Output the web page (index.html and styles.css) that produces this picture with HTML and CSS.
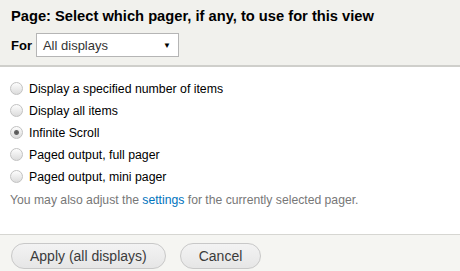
FILE: index.html
```html
<!DOCTYPE html>
<html lang="en">
<head>
    <meta charset="UTF-8">
    <meta name="viewport" content="width=device-width, initial-scale=1.0">
    <title>Pager settings</title>
    <link rel="stylesheet" href="styles.css">
</head>
<body>

<div class="dialog">
    <div class="dialog-header">
        <h1>Page: Select which pager, if any, to use for this view</h1>
        <div class="display-row">
            <label for="displaySelect" class="for-label">For</label>
            <div class="select-box" id="displaySelect">
                <span>All displays</span>
                <span class="select-arrow">&#9660;</span>
            </div>
        </div>
    </div>

    <div class="dialog-body">
        <ul class="pager-options">
            <li><label><input type="radio" name="pager" value="some"> Display a specified number of items</label></li>
            <li><label><input type="radio" name="pager" value="none"> Display all items</label></li>
            <li><label><input type="radio" name="pager" value="infinite" checked> Infinite Scroll</label></li>
            <li><label><input type="radio" name="pager" value="full"> Paged output, full pager</label></li>
            <li><label><input type="radio" name="pager" value="mini"> Paged output, mini pager</label></li>
        </ul>
        <p class="description">You may also adjust the <a href="#">settings</a> for the currently selected pager.</p>
    </div>

    <div class="dialog-footer">
        <button class="btn">Apply (all displays)</button>
        <button class="btn">Cancel</button>
    </div>
</div>

</body>
</html>
```

FILE: styles.css
```css
body {
    margin: 0;
    padding: 0;
    font-family: "Liberation Sans", Arial, sans-serif;
    background: #fff;
    color: #000;
}

.dialog {
    width: 460px;
    height: 271px;
    display: flex;
    flex-direction: column;
    overflow: hidden;
}

.dialog-header {
    background: #f1f1ed;
    padding: 7px 11px 8px;
    border-bottom: 2px solid #cfcfcb;
}

h1 {
    margin: 0;
    font-size: 14.7px;
    line-height: 18px;
    font-weight: bold;
    color: #000;
}

.display-row {
    display: flex;
    align-items: center;
    margin-top: 8px;
    gap: 4px;
}

.for-label {
    font-size: 13px;
    font-weight: bold;
}

.select-box {
    width: 128px;
    height: 22px;
    border: 1px solid #b5b5b5;
    background: #fff;
    display: flex;
    align-items: center;
    justify-content: space-between;
    padding: 0 7px 0 6px;
    font-size: 13px;
    color: #333;
}

.select-arrow {
    font-size: 8px;
    color: #000;
}

.dialog-body {
    flex: 1;
    padding: 11px 10px 0;
}

.pager-options {
    list-style: none;
    margin: 0;
    padding: 0;
}

.pager-options li {
    height: 22px;
    display: flex;
    align-items: center;
    font-size: 12.3px;
    color: #000;
}

.pager-options label {
    display: flex;
    align-items: center;
    gap: 6px;
}

input[type="radio"] {
    appearance: none;
    -webkit-appearance: none;
    margin: 0;
    width: 13px;
    height: 13px;
    border-radius: 50%;
    border: 1px solid #c2c2c2;
    background: linear-gradient(#fdfdfd, #dcdcdc);
    position: relative;
    top: -1px;
}

input[type="radio"]:checked {
    background: radial-gradient(circle, #555 0, #666 2px, transparent 3px), linear-gradient(#fdfdfd, #dcdcdc);
}

.description {
    margin: 5px 0 0;
    font-size: 12.2px;
    color: #777;
}

.description a {
    color: #0074bd;
    text-decoration: none;
}

.dialog-footer {
    background: #f5f5f2;
    border-top: 1px solid #d6d6d2;
    padding: 8px 11px 0;
    display: flex;
    gap: 14px;
    height: 28px;
}

.btn {
    height: 26px;
    padding: 0 18px;
    border: 1px solid #c8c8c8;
    border-radius: 14px;
    background: linear-gradient(#f3f3f3, #e6e6e6);
    font-family: "Liberation Sans", Arial, sans-serif;
    font-size: 14px;
    color: #3b3b3b;
}
```
